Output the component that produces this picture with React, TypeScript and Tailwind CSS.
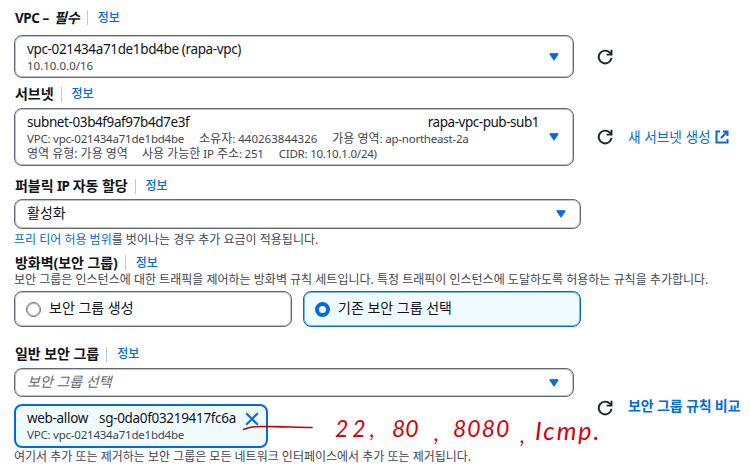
import { ReactNode } from "react";
import clsx from "clsx";

const RefreshIcon = () => (
  <svg width="16" height="16" viewBox="0 0 16 16" fill="none" stroke="#1b232d" strokeWidth="1.9">
    <path d="M14.5 8.8A6.4 6.4 0 1 1 12.9 3.7L14.2 5.2" />
    <path d="M14.5 0.8V5.6H9.6" />
  </svg>
);

const ExternalIcon = () => (
  <svg width="14" height="14" viewBox="0 0 14 14" fill="none" stroke="#006ce0" strokeWidth="2">
    <path d="M5 1.5H1.5V12.5H12.5V9" />
    <path d="M8 1.5H12.5V6M12.3 1.7L6 8" />
  </svg>
);

const CloseIcon = () => (
  <svg width="14" height="14" viewBox="0 0 14 14" fill="none" stroke="#006ce0" strokeWidth="2">
    <path d="M1.2 1.2L12.8 12.8M12.8 1.2L1.2 12.8" />
  </svg>
);

const Caret = () => (
  <svg width="10" height="8" viewBox="0 0 10 8" className="shrink-0">
    <path d="M1 0.8H9L5 7Z" fill="#006ce0" stroke="#006ce0" strokeWidth="1.2" strokeLinejoin="round" />
  </svg>
);

interface TextProps {
  children: ReactNode;
  className?: string;
}

// latin runs are set a touch tighter than the hangul around them
const Latin = ({ children, className }: TextProps) => (
  <span className={clsx("text-[0.96em] tracking-[-0.02em]", className)}>{children}</span>
);

const Label = ({ children, className }: TextProps) => (
  <div className={clsx("flex items-center whitespace-nowrap pl-px leading-5", className)}>
    <span className="text-[14px] font-bold tracking-[-0.05px] text-[#0f141a]">{children}</span>
    <span className="ml-[7px] mr-2.5 h-[15px] w-px bg-[#c6c6cd]" />
    <span className="text-[12px] font-medium text-[#006ce0]">정보</span>
  </div>
);

const Select = ({ children, className }: TextProps) => (
  <div
    className={clsx(
      "flex items-center justify-between rounded-lg border border-[#656871] bg-white pl-3 whitespace-nowrap ring-1 ring-inset ring-[#656871]/40",
      className
    )}
  >
    <div className="flex-1">{children}</div>
    <Caret />
  </div>
);

const App = () => {
  return (
    <main className="relative h-[472px] w-[750px] overflow-hidden bg-white pl-[14px] font-['Noto_Sans','Noto_Sans_CJK_KR',sans-serif] text-[#0f141a]">
      <Label className="h-[35px]">
        <Latin className="mr-0.5 tracking-[-0.03em]">VPC – </Latin>
        <em>필수</em>
      </Label>
      <div className="flex items-center">
        <Select className="h-[43px] w-[560px] pr-[14px]">
          <p className="text-[13.5px] leading-[17px] tracking-[-0.36px]">vpc-021434a71de1bd4be (rapa-vpc)</p>
          <p className="text-[11.5px] leading-[15px] text-[#424650]">10.10.0.0/16</p>
        </Select>
        <div className="ml-[23px]">
          <RefreshIcon />
        </div>
      </div>

      <Label className="h-[30px] pt-0.5">서브넷</Label>
      <div className="flex items-center">
        <Select className="h-[58px] w-[560px] pr-[14px]">
          <div className="flex justify-between pr-[10px] text-[13.5px] leading-[18px] tracking-[-0.4px]">
            <span>subnet-03b4f9af97b4d7e3f</span>
            <span className="tracking-[-0.47px]">rapa-vpc-pub-sub1</span>
          </div>
          <p className="flex gap-[15px] text-[12px] leading-[15px] text-[#424650]">
            <Latin>VPC: vpc-021434a71de1bd4be</Latin>
            <span>
              소유자<Latin className="tracking-[0em]">: 440263844326</Latin>
            </span>
            <span>
              가용 영역<Latin>: ap-northeast-2a</Latin>
            </span>
          </p>
          <p className="flex gap-[15px] text-[12px] leading-[15px] text-[#424650]">
            <span>영역 유형: 가용 영역</span>
            <span className="-ml-px">
              사용 가능한 <Latin>IP</Latin> 주소<Latin>: 251</Latin>
            </span>
            <Latin>CIDR: 10.10.1.0/24)</Latin>
          </p>
        </Select>
        <div className="ml-[23px]">
          <RefreshIcon />
        </div>
        <a className="ml-[15px] flex items-center gap-1 whitespace-nowrap text-[13.7px] leading-5 text-[#006ce0]">
          새 서브넷 생성
          <ExternalIcon />
        </a>
      </div>

      <Label className="h-[33px] pt-[7px]">
        퍼블릭 <Latin className="tracking-[-0.06em]">IP</Latin> 자동 할당
      </Label>
      <Select className="h-[30px] w-[567px] pr-[14px]">
        <p className="-mt-0.5 text-[14px] leading-5">활성화</p>
      </Select>
      <p className="h-[21px] whitespace-nowrap text-[12px] leading-[21px] text-[#424650]">
        <span className="text-[#006ce0]">프리 티어 허용 범위</span>를 벗어나는 경우 추가 요금이 적용됩니다.
      </p>

      <Label className="h-[23px] pt-0.5">방화벽(보안 그룹)</Label>
      <p className="h-[18px] whitespace-nowrap text-[12px] leading-[14px] tracking-[0.01px] text-[#424650]">
        보안 그룹은 인스턴스에 대한 트래픽을 제어하는 방화벽 규칙 세트입니다. 특정 트래픽이 인스턴스에 도달하도록 허용하는 규칙을 추가합니다.
      </p>
      <div className="flex gap-[11px] text-[14px] leading-5">
        <div className="flex h-9 w-[278px] items-center gap-2 rounded-lg border border-[#656871] pl-[11px] ring-1 ring-inset ring-[#656871]/40">
          <span className="size-[15px] rounded-full border border-[#656871] ring-1 ring-inset ring-[#656871]/50" />
          <span className="-mt-0.5">보안 그룹 생성</span>
        </div>
        <div className="flex h-9 w-[278px] items-center gap-2 rounded-lg border border-[#006ce0] bg-[#f0fbff] pl-[11px] ring-1 ring-inset ring-[#006ce0]/50">
          <span className="size-[15px] rounded-full border-[4.5px] border-[#006ce0] bg-white" />
          <span className="-mt-0.5">기존 보안 그룹 선택</span>
        </div>
      </div>

      <Label className="h-[41px] pt-[13px]">일반 보안 그룹</Label>
      <div className="flex items-center">
        <div>
          <Select className="h-[29px] w-[560px] pr-[14px]">
            <p className="-mt-0.5 text-[14px] italic leading-5 text-[#656871]">보안 그룹 선택</p>
          </Select>
          <div className="mt-[7px] flex h-11 w-[254px] justify-between whitespace-nowrap rounded-lg border-2 border-[#006ce0] bg-[#f0fbff] pl-[11px] pr-[7px] pt-[3px]">
            <div>
              <p className="flex gap-[11px] text-[13.5px] leading-[18px] tracking-[-0.32px]">
                <span>web-allow</span>
                <span>sg-0da0f03219417fc6a</span>
              </p>
              <p className="text-[12px] leading-[15px] text-[#424650]">
                <Latin>VPC: vpc-021434a71de1bd4be</Latin>
              </p>
            </div>
            <div className="mt-[3px]">
              <CloseIcon />
            </div>
          </div>
        </div>
        <div className="ml-[23px]">
          <RefreshIcon />
        </div>
        <a className="-mt-1 ml-[15px] whitespace-nowrap text-[14px] font-bold leading-5 tracking-[-0.15px] text-[#006ce0]">
          보안 그룹 규칙 비교
        </a>
      </div>
      <p className="whitespace-nowrap text-[12px] leading-[18px] text-[#424650]">
        여기서 추가 또는 제거하는 보안 그룹은 모든 네트워크 인터페이스에서 추가 또는 제거됩니다.
      </p>

      {/* pen annotation over the form */}
      <svg className="absolute left-[240px] top-[420px]" width="76" height="14" viewBox="0 0 76 14" fill="none">
        <path d="M3.5 9.5C12 5.5 20 6.5 34 6.6S58 7.5 72 7.5" stroke="#c80000" strokeWidth="1.6" strokeLinecap="round" />
      </svg>
      <div className="absolute left-[335px] top-[412px] flex font-['Lato',sans-serif] text-[23px] italic leading-8 text-[#d8000c]">
        <span className="w-[57px] tracking-[4px]">22,</span>
        <span className="w-[42px]">80</span>
        <span className="w-[19px] pt-1">,</span>
        <span className="w-[67px] tracking-[1px]">8080</span>
        <span className="w-[15px] pt-1.5">,</span>
        <span className="pt-0.5 text-[25px] tracking-[2px]">Icmp.</span>
      </div>
    </main>
  );
};

export default App;
